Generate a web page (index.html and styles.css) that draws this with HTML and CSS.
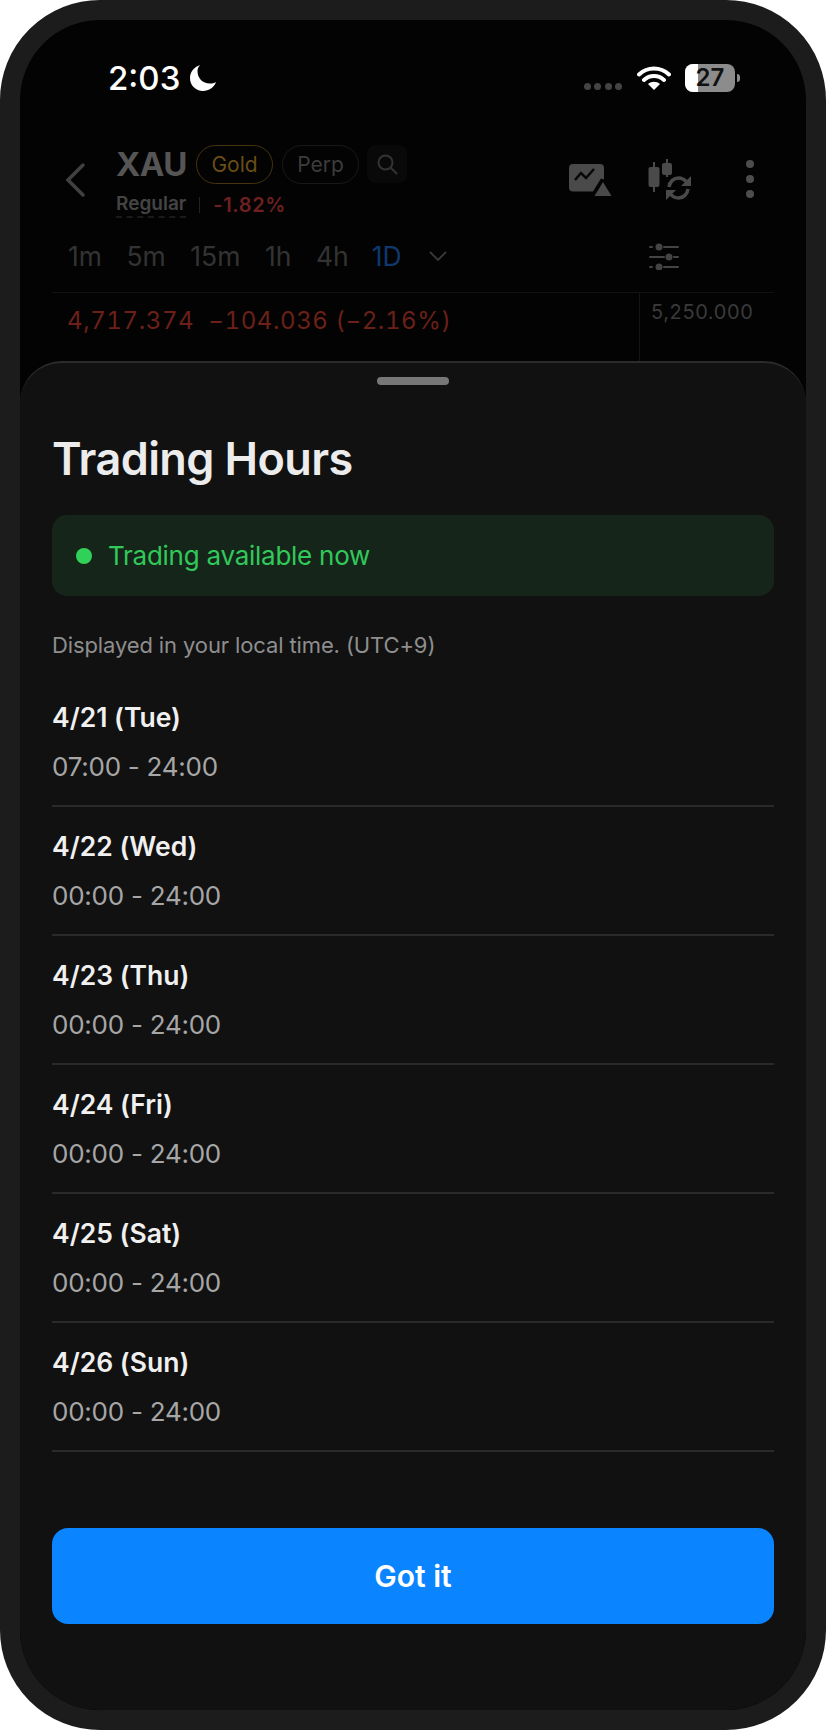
FILE: index.html
```html
<!DOCTYPE html>
<html lang="en">
<head>
  <meta charset="UTF-8">
  <meta name="viewport" content="width=device-width, initial-scale=1.0">
  <title>Trading Hours</title>
  <link rel="stylesheet" href="styles.css">
</head>
<body>

  <div class="phone">
    <div class="screen">

      <!-- Dimmed page behind the sheet -->
      <div class="backdrop">
        <div class="statusbar">
          <div class="clock">
            <span>2:03</span>
            <svg class="moon" viewBox="0 0 28 28"><path d="M11 1C5 3 1 8 1 14c0 7.500 5.800 13 13 13 6 0 11-3.600 13-9-1.800 1-3.800 1.500-6 1.500-7.500 0-12.500-5.500-12.500-12.500C8.500 4.800 9.400 2.800 11 1z" fill="#fff"/></svg>
          </div>
          <div class="status-right">
            <div class="signal"><i></i><i></i><i></i><i></i></div>
            <svg class="wifi" viewBox="0 0 34 26"><path d="M2 9.500C10.500 1.500 23.500 1.500 32 9.500M7 15c5.800-5.200 14.200-5.200 20 0" fill="none" stroke="#fff" stroke-width="4" stroke-linecap="round"/><path d="M17 25l-6-6c3.500-3 8.500-3 12 0z" fill="#fff"/></svg>
            <div class="battery"><span class="battery-level"></span><span class="battery-text">27</span></div>
            <span class="battery-nub"></span>
          </div>
        </div>

        <div class="header">
          <svg class="back" viewBox="0 0 22 36"><path d="M19 3L4 18l15 15" fill="none" stroke="#414141" stroke-width="3.500" stroke-linecap="round"/></svg>
          <div class="symbol">
            <div class="symbol-top">
              <span class="ticker">XAU</span>
              <span class="pill pill-gold">Gold</span>
              <span class="pill">Perp</span>
              <span class="search">
                <svg viewBox="0 0 22 22"><circle cx="9.500" cy="9.500" r="7" fill="none" stroke="#333" stroke-width="2"/><path d="M15 15l5.500 5.500" stroke="#333" stroke-width="2" stroke-linecap="round"/></svg>
              </span>
            </div>
            <div class="symbol-bottom">
              <span class="session">Regular</span>
              <span class="sep"></span>
              <span class="change">-1.82%</span>
            </div>
          </div>
          <div class="header-icons">
            <svg class="icon-alert" viewBox="0 0 44 34"><path d="M4 0h27a4 4 0 0 1 4 4v11.500l-3-1-8 13H4a4 4 0 0 1-4-4V4a4 4 0 0 1 4-4z" fill="#4a4a4a"/><path d="M6 16l6-7 5 5 8-9" fill="none" stroke="#080808" stroke-width="2.500"/><path d="M34 18l8.500 14h-17z" fill="#4a4a4a"/></svg>
            <svg class="icon-candle" viewBox="0 0 44 42"><path d="M5 3h2v5h2.500A2 2 0 0 1 11.500 10v16a2 2 0 0 1-2 2H7v5H5v-5H2.500a2 2 0 0 1-2-2V10a2 2 0 0 1 2-2H5zM18 0h2v4h2a2 2 0 0 1 2 2v8a2 2 0 0 1-2 2h-2v2h-2v-2h-2a2 2 0 0 1-2-2V6a2 2 0 0 1 2-2h2z" fill="#4a4a4a"/><path d="M21 28c.5-5 4.500-9 9.500-9 3.500 0 6 1.500 8 4M40 30c-.5 5-4.500 9-9.500 9-3.500 0-6-1.500-8-4" fill="none" stroke="#4a4a4a" stroke-width="3.500"/><path d="M43 17v10H33zM18 41V31h10z" fill="#4a4a4a"/></svg>
            <div class="kebab"><i></i><i></i><i></i></div>
          </div>
        </div>

        <div class="tabs">
          <span>1m</span>
          <span>5m</span>
          <span>15m</span>
          <span>1h</span>
          <span>4h</span>
          <span class="tab-active">1D</span>
          <svg class="tab-more" viewBox="0 0 18 10"><path d="M1 1l8 8 8-8" fill="none" stroke="#3a3a3a" stroke-width="1.800"/></svg>
          <svg class="tab-settings" viewBox="0 0 30 27"><g stroke="#444" stroke-width="2" stroke-linecap="round"><path d="M1 4h2M15 4h14M1 14h14M25 14h4M1 24h2M15 24h14"/></g><g fill="#444"><circle cx="10" cy="4" r="3.500"/><circle cx="20" cy="14" r="3.500"/><circle cx="10" cy="24" r="3.500"/></g></svg>
        </div>

        <div class="chart">
          <div class="price">4,717.374&nbsp; −104.036 (−2.16%)</div>
          <div class="axis">5,250.000</div>
        </div>
      </div>

      <!-- Bottom sheet -->
      <div class="sheet">
        <div class="handle"></div>
        <h2>Trading Hours</h2>

        <div class="notice">
          <span class="dot"></span>
          <span>Trading available now</span>
        </div>

        <p class="hint">Displayed in your local time. (UTC+9)</p>

        <ul class="days">
          <li><b>4/21 (Tue)</b><span>07:00 - 24:00</span></li>
          <li><b>4/22 (Wed)</b><span>00:00 - 24:00</span></li>
          <li><b>4/23 (Thu)</b><span>00:00 - 24:00</span></li>
          <li><b>4/24 (Fri)</b><span>00:00 - 24:00</span></li>
          <li><b>4/25 (Sat)</b><span>00:00 - 24:00</span></li>
          <li><b>4/26 (Sun)</b><span>00:00 - 24:00</span></li>
        </ul>

        <button class="confirm">Got it</button>
      </div>

    </div>
  </div>

</body>
</html>
```

FILE: styles.css
```css
* {
  box-sizing: border-box;
}

body {
  margin: 0;
  background-color: #fff;
  font-family: Inter, "Liberation Sans", sans-serif;
}

.phone {
  width: 826px;
  height: 1730px;
  border: 20px solid #1c1c1c;
  border-radius: 100px;
  background-color: #111;
  overflow: hidden;
}

.screen {
  display: flex;
  flex-direction: column;
  height: 100%;
  border-radius: 80px;
  overflow: hidden;
  background-color: #030303;
}

/* Backdrop */
.backdrop {
  height: 341px;
  flex-shrink: 0;
  overflow: hidden;
}

.statusbar {
  display: flex;
  justify-content: space-between;
  height: 109px;
  padding: 40px 66px 0 88px;
}

.clock {
  display: flex;
  align-items: center;
  gap: 9px;
  height: 36px;
  color: #fff;
  font-size: 33px;
  font-weight: 500;
}

.moon {
  width: 28px;
  height: 28px;
}

.status-right {
  display: flex;
  align-items: center;
  height: 36px;
}

.signal {
  display: flex;
  gap: 3.500px;
  margin-top: 16px;
  margin-right: 15px;
}

.signal i {
  width: 7px;
  height: 7px;
  border-radius: 50%;
  background-color: #444;
}

.wifi {
  width: 34px;
  height: 26px;
  margin-right: 14px;
}

.battery {
  position: relative;
  width: 50px;
  height: 28px;
  border-radius: 8px;
  background-color: #8c8c8c;
  overflow: hidden;
  text-align: center;
}

.battery-level {
  position: absolute;
  left: 0;
  top: 0;
  width: 13px;
  height: 100%;
  background-color: #fff;
}

.battery-text {
  position: relative;
  color: #111;
  font-size: 24px;
  font-weight: 600;
  line-height: 28px;
}

.battery-nub {
  width: 3px;
  height: 8px;
  margin-left: 2px;
  border-radius: 0 3px 3px 0;
  background-color: #8c8c8c;
}

.header {
  display: flex;
  height: 96px;
  padding-left: 44px;
}

.back {
  width: 22px;
  height: 36px;
  margin-top: 33px;
  margin-right: 30px;
}

.symbol-top {
  display: flex;
  align-items: center;
  gap: 9px;
  height: 40px;
  margin-top: 15px;
}

.ticker {
  color: #555;
  font-size: 33px;
  font-weight: 700;
  letter-spacing: -0.5px;
}

.pill {
  display: flex;
  align-items: center;
  justify-content: center;
  width: 77px;
  height: 39px;
  border: 1.500px solid #191919;
  border-radius: 20px;
  color: #3c3c3c;
  font-size: 21px;
}

.pill-gold {
  border-color: #46340f;
  color: #6a4e14;
}

.search {
  display: flex;
  align-items: center;
  justify-content: center;
  width: 40px;
  height: 38px;
  margin-left: -1px;
  border-radius: 8px;
  background-color: #090909;
}

.search svg {
  width: 22px;
  height: 22px;
}

.symbol-bottom {
  display: flex;
  align-items: center;
  margin-top: 8px;
  height: 26px;
}

.session {
  color: #444;
  font-size: 19px;
  font-weight: 600;
  border-bottom: 2px dashed #1a1a1a;
  line-height: 23px;
  height: 26px;
}

.sep {
  width: 1px;
  height: 16px;
  margin: 0 13px;
  background-color: #222;
}

.change {
  color: #6e2020;
  font-size: 20px;
  font-weight: 600;
  letter-spacing: 0.6px;
}

.header-icons {
  display: flex;
  align-items: flex-start;
  margin-left: auto;
  padding-right: 52px;
}

.icon-alert {
  width: 44px;
  height: 34px;
  margin-top: 35px;
  margin-right: 35px;
}

.icon-candle {
  width: 44px;
  height: 42px;
  margin-top: 30px;
  margin-right: 54px;
}

.kebab {
  display: flex;
  flex-direction: column;
  gap: 7px;
  margin-top: 31px;
}

.kebab i {
  width: 8px;
  height: 8px;
  border-radius: 50%;
  background-color: #4d4d4d;
}

.tabs {
  display: flex;
  align-items: center;
  gap: 24.500px;
  height: 68px;
  margin: 0 32px;
  padding-left: 16px;
  padding-bottom: 5px;
  border-bottom: 1px solid #111;
  color: #333;
  font-size: 26.500px;
}

.tab-active {
  margin-left: -1.500px;
  color: #0f386e;
}

.tab-more {
  width: 18px;
  height: 10px;
  margin-left: 3px;
}

.tab-settings {
  width: 30px;
  height: 27px;
  margin-left: auto;
  margin-right: 95px;
}

.chart {
  display: flex;
  justify-content: space-between;
  height: 68px;
  margin: 0 32px;
}

.price {
  padding-top: 13px;
  padding-left: 15px;
  color: #6b2018;
  font-size: 24px;
  font-variant-numeric: tabular-nums;
  letter-spacing: 0.6px;
}

.axis {
  width: 135px;
  padding-top: 7px;
  padding-left: 11px;
  border-left: 1px solid #141414;
  color: #3a3a3a;
  font-size: 20px;
  letter-spacing: 0.6px;
}

/* Sheet */
.sheet {
  display: flex;
  flex-direction: column;
  flex-grow: 1;
  padding: 0 32px;
  border-top: 2px solid #2b2b2b;
  border-radius: 42px 42px 0 0;
  background-color: #111;
}

.handle {
  flex-shrink: 0;
  align-self: center;
  width: 72px;
  height: 8px;
  margin-top: 14px;
  border-radius: 4px;
  background-color: #777;
}

h2 {
  margin: 46px 0 0;
  color: #ececec;
  font-size: 45px;
  font-weight: 600;
  line-height: 56px;
  letter-spacing: -0.6px;
}

.notice {
  display: flex;
  align-items: center;
  gap: 16px;
  height: 81px;
  margin-top: 28px;
  padding-left: 24px;
  border-radius: 15px;
  background-color: #16251a;
  color: #30c95a;
  font-size: 26px;
  letter-spacing: -0.26px;
}

.dot {
  width: 16px;
  height: 16px;
  border-radius: 50%;
  background-color: #30d158;
}

.hint {
  margin: 34px 0 0;
  color: #8e8e8e;
  font-size: 22px;
  line-height: 30px;
  letter-spacing: -0.12px;
}

.days {
  margin: 40px 0 0;
  padding: 0;
  list-style: none;
}

.days li {
  display: flex;
  flex-direction: column;
  height: 129px;
  padding-top: 22px;
  border-bottom: 2px solid #2a2a2a;
}

.days li:first-child {
  height: 107px;
  padding-top: 0;
}

.days b {
  color: #f0f0f0;
  font-size: 26.500px;
  font-weight: 600;
  line-height: 34px;
}

.days span {
  margin-top: 15px;
  color: #a6a6a6;
  font-size: 26px;
  line-height: 36px;
  letter-spacing: -0.25px;
}

.confirm {
  flex-shrink: 0;
  height: 96px;
  margin-top: 76px;
  border: 0;
  border-radius: 16px;
  background-color: #0a84ff;
  color: #fff;
  font-family: inherit;
  font-size: 30px;
  font-weight: 600;
}
```
